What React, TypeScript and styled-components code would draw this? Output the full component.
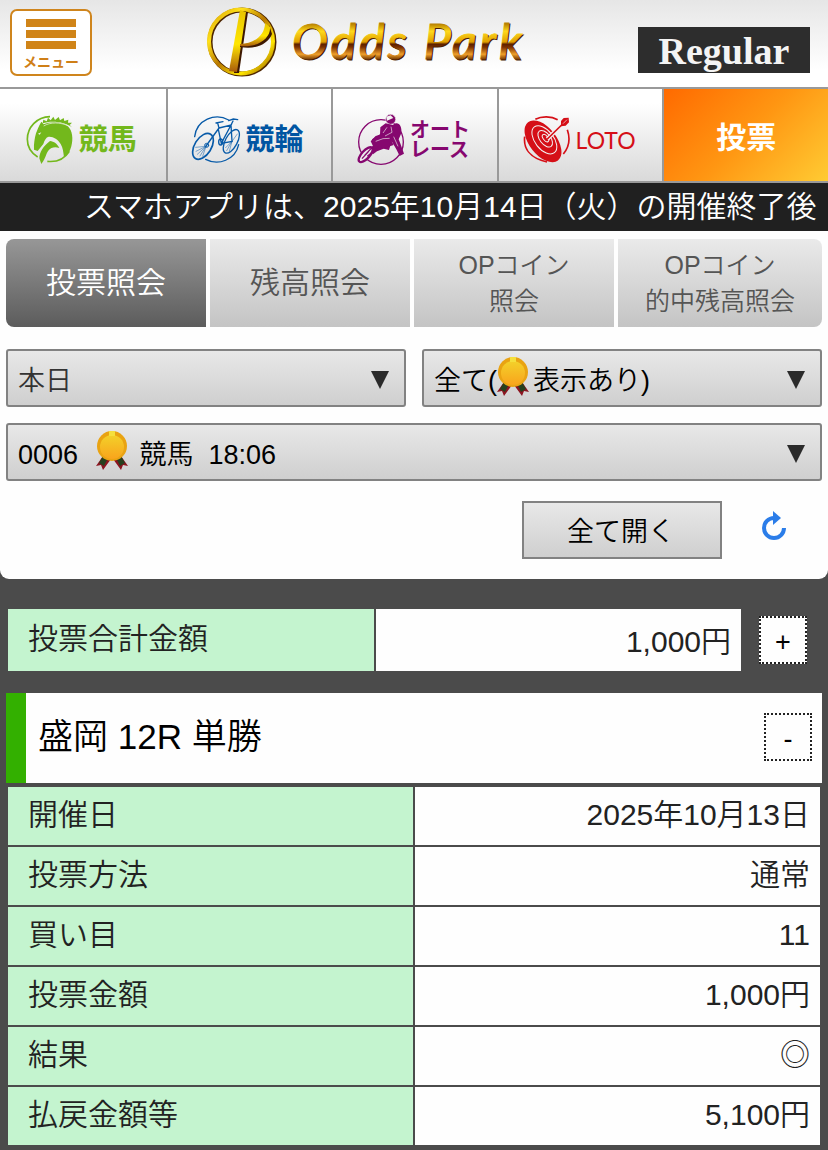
import React from "react";
import styled, { createGlobalStyle } from "styled-components";

const GlobalStyle = createGlobalStyle`
  *, *::before, *::after { box-sizing: border-box; }
  body {
    margin: 0;
    background: #4b4b4b;
    color: #222;
    font-family: "Liberation Sans", "Noto Sans CJK JP", sans-serif;
    font-size: 30px;
    font-weight: 350;
  }
  button, select { font: inherit; color: inherit; margin: 0; border-radius: 0; }
`;

/* ---------- header ---------- */

const Header = styled.header`
  display: flex;
  align-items: flex-start;
  height: 89px;
  padding: 9px 18px 0 10px;
  border-bottom: 2px solid #999;
  background: linear-gradient(#e6e6e6, #fff 80%);
`;

const MenuButton = styled.button`
  display: flex;
  flex-direction: column;
  align-items: center;
  gap: 3px;
  width: 82px;
  height: 67px;
  padding: 8px 0 0;
  border: 2px solid #cf851d;
  border-radius: 7px;
  background: #fff;
  color: #cf7f17;
  font-size: 14px;
  line-height: 20px;
  font-weight: 700;
`;

const MenuBar = styled.span`
  width: 50px;
  height: 8px;
  background: #d08418;
`;

const Logo = styled.a`
  display: flex;
  margin: 0 auto;
  text-decoration: none;
  svg { overflow: visible; }
`;

const Rank = styled.div`
  width: 172px;
  height: 46px;
  margin-top: 18px;
  background: #2d2d2d;
  color: #f4f4f4;
  font-family: "Liberation Serif", serif;
  font-size: 38px;
  font-weight: 700;
  line-height: 48px;
  text-align: center;
`;

/* ---------- category navigation ---------- */

const Nav = styled.nav`
  display: grid;
  grid-template-columns: repeat(5, 1fr);
  height: 94px;
  border-bottom: 2px solid #999;
`;

const NavLink = styled.a<{ $color: string; $size?: number }>`
  display: flex;
  align-items: center;
  justify-content: center;
  gap: 4px;
  padding: 10px 4px 0 0;
  background: linear-gradient(#fff 15%, #d9d9d9);
  color: ${(p) => p.$color};
  font-size: ${(p) => p.$size ?? 29}px;
  font-weight: 700;
  line-height: 1;
  text-decoration: none;
  & + & { border-left: 2px solid #999; }
`;

const LotoLink = styled(NavLink)`
  border-left: 2px solid #999;
  font-family: Lato, sans-serif;
  font-weight: 400;
`;

const VoteLink = styled(NavLink)`
  padding: 6px 0 0;
  border-left: 2px solid #999;
  background: linear-gradient(135deg, #ff6a00, #ff9612 50%, #ffcb33);
`;

const Ticker = styled.div`
  height: 48px;
  padding-left: 84px;
  background: #202020;
  color: #fff;
  line-height: 48px;
  white-space: nowrap;
  overflow: hidden;
`;

/* ---------- inquiry panel ---------- */

const Panel = styled.section`
  padding: 8px 6px 20px;
  border-radius: 0 0 9px 9px;
  background: #fefefe;
`;

const Tabs = styled.div`
  display: grid;
  grid-template-columns: 50fr 50fr 50fr 51fr;
  gap: 4px;
  margin-bottom: 22px;
  border-radius: 8px;
  overflow: hidden;
`;

const Tab = styled.button<{ $active?: boolean; $small?: boolean }>`
  height: 88px;
  padding: 0;
  border: 0;
  background: ${(p) =>
    p.$active ? "linear-gradient(#979797, #5c5c5c)" : "linear-gradient(#eaeaea, #c4c4c4)"};
  color: ${(p) => (p.$active ? "#fff" : "#555")};
  font-size: ${(p) => (p.$small ? 25 : 30)}px;
  line-height: 36px;
`;

const Filters = styled.div`
  display: grid;
  grid-template-columns: 1fr 1fr;
  gap: 16px;
`;

const Field = styled.label<{ $wide?: boolean }>`
  position: relative;
  grid-column: ${(p) => (p.$wide ? "1 / -1" : "auto")};
`;

const Select = styled.select<{ $muted?: boolean }>`
  display: block;
  appearance: none;
  width: 100%;
  height: 58px;
  padding: 5px 40px 0 10px;
  border: 2px solid #828282;
  border-radius: 3px;
  background: linear-gradient(#e8e8e8, #cfcfcf);
  color: ${(p) => (p.$muted ? "#333" : "#000")};
  font-size: 27px;
`;

const Arrow = styled.svg`
  position: absolute;
  top: 22px;
  right: 17px;
  width: 18px;
  height: 18px;
  pointer-events: none;
`;

const MedalIcon = styled.svg<{ $left: number }>`
  position: absolute;
  top: 6px;
  left: ${(p) => p.$left}px;
  width: 34px;
  height: 42px;
  pointer-events: none;
`;

const Actions = styled.div`
  display: flex;
  justify-content: flex-end;
  align-items: center;
  gap: 36px;
  margin-top: 20px;
  padding-right: 32px;
`;

const OpenAll = styled.button`
  width: 200px;
  height: 58px;
  padding: 0 2px 2px 0;
  border: 2px solid #828282;
  background: linear-gradient(#e8e8e8, #cfcfcf);
  color: #000;
  font-size: 27px;
`;

const Reload = styled.button`
  width: 32px;
  height: 40px;
  padding: 0;
  border: 0;
  background: none;
  svg { display: block; }
`;

/* ---------- result ---------- */

const Total = styled.div`
  display: flex;
  align-items: center;
  gap: 16px;
  padding: 28px 21px 20px 6px;
`;

const DataTable = styled.table`
  width: 100%;
  table-layout: fixed;
  border-spacing: 2px;
`;

const Label = styled.th`
  padding: 0 20px 2px;
  background: #c4f4cf;
  font-weight: inherit;
  text-align: left;
  line-height: 56px;
`;

const Value = styled.td`
  padding: 0 10px 2px;
  background: #fefefe;
  text-align: right;
  line-height: 56px;
`;

const TotalLabel = styled(Label)`
  height: 62px;
`;

const TotalValue = styled(Value)`
  padding: 4px 10px 0;
`;

const Toggle = styled.button`
  flex: none;
  width: 48px;
  height: 48px;
  padding: 4px 0 0;
  border: 2px dotted #222;
  background: #fefefe;
  color: #000;
  font-size: 27px;
  line-height: 1;
`;

const Ticket = styled.section`
  padding: 0 6px 3px;
`;

const TicketHead = styled.div`
  display: flex;
  align-items: center;
  justify-content: space-between;
  height: 90px;
  margin-bottom: 2px;
  padding: 0 10px 2px 12px;
  border-left: 20px solid #33b000;
  background: #fefefe;
`;

const TicketTitle = styled.h2`
  margin: 0;
  color: #000;
  font-size: 35px;
  font-weight: inherit;
  line-height: 50px;
`;

/* ---------- drawings ---------- */

const LogoMark = () => (
  <svg width="320" height="70" viewBox="205 9 320 70" role="img" aria-label="Odds Park">
    <defs>
      <linearGradient id="ring" x1="0" y1="0" x2="1" y2="1">
        <stop offset="0" stopColor="#d49a00" />
        <stop offset=".25" stopColor="#ffe11a" />
        <stop offset=".5" stopColor="#b87800" />
        <stop offset=".75" stopColor="#ffe600" />
        <stop offset="1" stopColor="#8a4a00" />
      </linearGradient>
      <linearGradient id="stem" x1="0" y1="0" x2="0" y2="1">
        <stop offset="0" stopColor="#e8c400" />
        <stop offset=".55" stopColor="#ffe600" />
        <stop offset="1" stopColor="#a85a0c" />
      </linearGradient>
      <linearGradient id="gold" gradientUnits="userSpaceOnUse" x1="0" y1="24" x2="0" y2="60">
        <stop offset="0" stopColor="#b98200" />
        <stop offset=".2" stopColor="#ffd91c" />
        <stop offset=".5" stopColor="#e0a000" />
        <stop offset=".56" stopColor="#5c2000" />
        <stop offset=".64" stopColor="#7a3000" />
        <stop offset=".84" stopColor="#f0a02a" />
        <stop offset="1" stopColor="#6a3000" />
      </linearGradient>
    </defs>
    <circle cx="242" cy="42" r="32" fill="none" stroke="#4e2600" strokeWidth="5" />
    <circle cx="241" cy="41.500" r="32" fill="none" stroke="url(#ring)" strokeWidth="4" />
    <path d="M243 11 L248 12 L239 73 L234 73 Z" fill="#3d1800" />
    <path d="M240 10 L246 12 L237 72 L229 71 Z" fill="url(#stem)" />
    <path d="M240 44 C254 46 268 40 269 25 L272 34 C268 44 256 50 240 47 Z" fill="#3d1800" />
    <path d="M240 44 C253 44 265 36 265 23 L270 27 C271 38 258 48 240 46 Z" fill="url(#stem)" />
    <g fontFamily="Lato, sans-serif" fontStyle="italic" fontWeight="400" fontSize="48" letterSpacing="3" strokeWidth="1">
      <text x="293" y="60" fill="#4a1c00" stroke="#4a1c00">Odds Park</text>
      <text x="292" y="59" fill="url(#gold)" stroke="url(#gold)">Odds Park</text>
    </g>
  </svg>
);

const HorseIcon = () => (
  <svg width="50" height="50" viewBox="75 93 150 150" fill="#73b81c" aria-hidden="true">
    <g fill="none" stroke="#73b81c" strokeWidth="5">
      <path d="M150 98 C110 99 82 130 82 166 C82 190 95 208 113 219" />
      <path d="M142 232 C170 235 194 224 208 202" />
    </g>
    <path d="M108 148 C112 138 115 128 124 113 L131 121 C150 112 185 112 203 126 C218 140 220 165 214 187 C210 203 202 213 192 220 C190 205 189 192 182 180 C174 166 160 157 146 158 C138 160 134 168 130 180 L113 201 L102 197 C101 180 104 163 108 148 Z" />
    <path d="M118 223 C118 205 130 186 150 171 C162 172 172 180 178 192 C165 188 153 190 146 199 C138 208 138 222 124 240 Z" />
    <path d="M128 118 L130 107 L140 112 L144 101 L152 109 L160 98 L165 108 L176 99 L180 109 L191 102 L193 111 L205 107 L204 116 L216 116 L209 123 L216 130 C195 114 155 108 128 118 Z" />
    <path d="M114 149 L124 145 L119 152 Z" fill="#f4f4f4" />
    <path d="M131 126 C150 114 182 114 205 126" fill="none" stroke="#f4f4f4" strokeWidth="2" />
  </svg>
);

const BikeIcon = () => (
  <svg width="50" height="50" viewBox="573 93 150 150" fill="none" stroke="#075aa8" strokeWidth="4" strokeLinecap="round" aria-hidden="true">
    <path d="M584 158 C590 108 645 85 686 108" />
    <path d="M617 226 C655 246 706 228 716 182" />
    <ellipse cx="609" cy="187" rx="25" ry="43" transform="rotate(32 609 187)" strokeWidth="5" />
    <ellipse cx="694" cy="172" rx="18" ry="39" transform="rotate(28 694 172)" />
    <path d="M648 117 L669 113 M653 117 L657 132 L618 186 M657 132 L693 123 L664 178 L655 136 M693 123 L699 111 M686 110 L700 105 L713 107 M693 123 L696 172 L664 178" />
    <ellipse cx="662" cy="174" rx="6" ry="9" />
    <circle cx="620" cy="184" r="6" strokeWidth="3" />
    <path d="M618 187 L588 202 M618 187 L592 211 M618 187 L600 216 M618 187 L587 190 M618 187 L608 217 M696 172 L680 200 M696 172 L688 202 M696 172 L677 191 M696 172 L712 150" strokeWidth="1.500" />
  </svg>
);

const MotorIcon = () => (
  <svg width="50" height="52" viewBox="77 84 150 156" fill="#86076f" aria-hidden="true">
    <circle cx="152" cy="168" r="67" fill="none" stroke="#86076f" strokeWidth="4" />
    <circle cx="181" cy="100" r="15" stroke="#ececec" strokeWidth="2" />
    <path d="M168 92 L181 88 L189 96 L170 104 Z" fill="#f4f4f4" />
    <path d="M166 112 L188 117 C202 104 216 118 213 142 L205 160 C210 172 216 190 221 203 L208 210 L198 190 L184 166 L176 192 L160 188 L140 196 L128 205 L118 194 L128 180 L121 166 L136 150 L149 146 L150 124 Z" />
    <path d="M125 160 L154 142 L192 147 L181 160 L190 177 L150 190 L130 188 Z" />
    <path d="M182 122 L185 139 L164 150 M136 166 L158 158 L178 157 M170 124 L158 141 M190 152 L203 181" fill="none" stroke="#e8e8e8" strokeWidth="2" />
    <ellipse cx="106" cy="206" rx="12" ry="28" transform="rotate(43 106 206)" fill="#ececec" stroke="#86076f" strokeWidth="7" />
    <path d="M103 208 L137 172 M111 211 L145 183 M95 218 L115 196" stroke="#86076f" strokeWidth="4" />
  </svg>
);

const TargetIcon = () => (
  <svg width="50" height="50" viewBox="580 93 150 150" fill="none" stroke="#d50f17" strokeWidth="5" aria-hidden="true">
    <path d="M620 106 C638 96 668 96 687 107 M716 137 C726 166 719 192 704 210 M588 158 C584 192 602 222 655 234" />
    <g transform="rotate(-38 643 172)">
      <ellipse cx="643" cy="172" rx="41" ry="73" fill="#d50f17" stroke="none" />
      <g stroke="#f4f4f4" strokeWidth="3">
        <ellipse cx="649" cy="171" rx="28" ry="49" />
        <ellipse cx="653" cy="170" rx="16" ry="29" />
        <ellipse cx="655" cy="169" rx="7" ry="13" />
      </g>
    </g>
    <path d="M656 165 L706 116" stroke="#f4f4f4" strokeWidth="12" />
    <path d="M656 165 L708 114" strokeWidth="5" />
    <path d="M697 111 L705 102 L720 101 L721 115 L711 125 L697 127 Z" fill="#d50f17" stroke="none" />
    <path d="M703 119 L715 107" stroke="#f4f4f4" strokeWidth="2" />
  </svg>
);

const Medal = ({ left }: { left: number }) => (
  <MedalIcon $left={left} viewBox="0 0 34 42" aria-hidden="true">
    <defs>
      <linearGradient id="coin" x1="0" y1="0" x2="0" y2="1">
        <stop offset="0" stopColor="#f3d12a" />
        <stop offset="1" stopColor="#f9a41c" />
      </linearGradient>
    </defs>
    <path d="M8 27 L1 37 L6 36 L8 41 L16 30 Z M26 27 L33 37 L28 36 L26 41 L18 30 Z" fill="#8c1420" />
    <path d="M8 27 L4 34 L9 37 L13 29 Z M26 27 L30 34 L25 37 L21 29 Z" fill="#26401e" />
    <circle cx="17" cy="17" r="15" fill="#e9a312" />
    <circle cx="17" cy="18" r="12" fill="url(#coin)" />
    <rect x="14" y="2" width="6" height="5" fill="#f5df3c" />
  </MedalIcon>
);

const DownArrow = () => (
  <Arrow viewBox="0 0 18 18" aria-hidden="true">
    <path d="M0 0 H18 L9 18 Z" fill="#2b2b2b" />
  </Arrow>
);

const rows = [
  ["開催日", "2025年10月13日"],
  ["投票方法", "通常"],
  ["買い目", "11"],
  ["投票金額", "1,000円"],
  ["結果", "◎"],
  ["払戻金額等", "5,100円"],
];

export default function App() {
  return (
    <>
      <GlobalStyle />
      <Header>
        <MenuButton type="button">
          <MenuBar />
          <MenuBar />
          <MenuBar />
          メニュー
        </MenuButton>
        <Logo href="#">
          <LogoMark />
        </Logo>
        <Rank>Regular</Rank>
      </Header>

      <Nav>
        <NavLink href="#" $color="#73b81c"><HorseIcon />競馬</NavLink>
        <NavLink href="#" $color="#0055a2"><BikeIcon />競輪</NavLink>
        <NavLink href="#" $color="#86076f" $size={20}>
          <MotorIcon />
          <span>オート<br />レース</span>
        </NavLink>
        <LotoLink href="#" $color="#d50f17" $size={23}><TargetIcon />LOTO</LotoLink>
        <VoteLink href="#" $color="#fff" $size={30}>投票</VoteLink>
      </Nav>

      <Ticker>スマホアプリは、2025年10月14日（火）の開催終了後</Ticker>

      <main>
        <Panel>
          <Tabs>
            <Tab type="button" $active>投票照会</Tab>
            <Tab type="button">残高照会</Tab>
            <Tab type="button" $small>OPコイン<br />照会</Tab>
            <Tab type="button" $small>OPコイン<br />的中残高照会</Tab>
          </Tabs>
          <Filters>
            <Field>
              <Select $muted aria-label="日付">
                <option>本日</option>
              </Select>
              <DownArrow />
            </Field>
            <Field>
              <Select aria-label="表示対象">
                <option>{"全て(\u3000\u2004表示あり)"}</option>
              </Select>
              <Medal left={74} />
              <DownArrow />
            </Field>
            <Field $wide>
              <Select aria-label="受付番号">
                <option>{"0006\u3000\u3000\u00a0競馬\u00a0\u00a018:06"}</option>
              </Select>
              <Medal left={89} />
              <DownArrow />
            </Field>
          </Filters>
          <Actions>
            <OpenAll type="button">全て開く</OpenAll>
            <Reload type="button" aria-label="更新">
              <svg width="32" height="40" viewBox="0 0 32 40">
                <path d="M16 8 A10 10 0 1 0 26 18" fill="none" stroke="#2b7de9" strokeWidth="4" />
                <path d="M15 1 L23 8 L15 15 Z" fill="#2b7de9" />
              </svg>
            </Reload>
          </Actions>
        </Panel>

        <Total>
          <DataTable>
            <tbody>
              <tr>
                <TotalLabel scope="row">投票合計金額</TotalLabel>
                <TotalValue>1,000円</TotalValue>
              </tr>
            </tbody>
          </DataTable>
          <Toggle type="button">+</Toggle>
        </Total>

        <Ticket>
          <TicketHead>
            <TicketTitle>盛岡 12R 単勝</TicketTitle>
            <Toggle type="button">-</Toggle>
          </TicketHead>
          <DataTable>
            <tbody>
              {rows.map(([label, value]) => (
                <tr key={label}>
                  <Label scope="row">{label}</Label>
                  <Value>{value}</Value>
                </tr>
              ))}
            </tbody>
          </DataTable>
        </Ticket>
      </main>
    </>
  );
}
